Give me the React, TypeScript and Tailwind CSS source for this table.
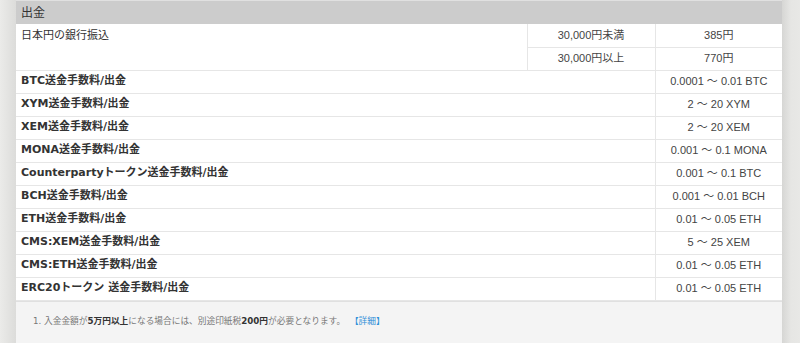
const rows: [string, string][] = [
  ["BTC送金手数料/出金", "0.0001 ～ 0.01 BTC"],
  ["XYM送金手数料/出金", "2 ～ 20 XYM"],
  ["XEM送金手数料/出金", "2 ～ 20 XEM"],
  ["MONA送金手数料/出金", "0.001 ～ 0.1 MONA"],
  ["Counterpartyトークン送金手数料/出金", "0.001 ～ 0.1 BTC"],
  ["BCH送金手数料/出金", "0.001 ～ 0.01 BCH"],
  ["ETH送金手数料/出金", "0.01 ～ 0.05 ETH"],
  ["CMS:XEM送金手数料/出金", "5 ～ 25 XEM"],
  ["CMS:ETH送金手数料/出金", "0.01 ～ 0.05 ETH"],
  ["ERC20トークン 送金手数料/出金", "0.01 ～ 0.05 ETH"],
];

export default function App() {
  return (
    <div className="flex w-[800px] h-[343px] overflow-hidden bg-[#e8e8e6] text-[#333] font-['DejaVu_Sans','Noto_Sans_CJK_JP',sans-serif]">
      <div className="w-4 bg-gradient-to-r from-[#ebebe9] to-[#dcdcda]"></div>

      <div className="w-[766px] flex flex-col bg-white">
        <div className="h-[24px] bg-[#cccccc] border-t border-[#e0e0e0] flex items-center px-[5px] text-[12px]">出金</div>

        <table className="w-full border-collapse text-[11px]">
          <colgroup>
            <col className="w-[511px]" />
            <col className="w-[128px]" />
            <col className="w-[127px]" />
          </colgroup>
          <tbody>
            <tr className="h-[23px]">
              <td rowSpan={2} className="align-top pl-[5px] pt-[4px] border-b border-[#e6e6e6] text-[11px]">日本円の銀行振込</td>
              <td className="text-center border-l border-b border-[#e6e6e6] font-['Liberation_Sans','Noto_Sans_CJK_JP',sans-serif] text-[#444]">30,000円未満</td>
              <td className="text-center border-l border-b border-[#e6e6e6] font-['Liberation_Sans','Noto_Sans_CJK_JP',sans-serif] text-[#444]">385円</td>
            </tr>
            <tr className="h-[23px]">
              <td className="text-center border-l border-b border-[#e6e6e6] font-['Liberation_Sans','Noto_Sans_CJK_JP',sans-serif] text-[#444]">30,000円以上</td>
              <td className="text-center border-l border-b border-[#e6e6e6] font-['Liberation_Sans','Noto_Sans_CJK_JP',sans-serif] text-[#444]">770円</td>
            </tr>
            {rows.map(([label, value]) => (
              <tr key={label} className="h-[23px]">
                <td colSpan={2} className="pl-[5px] font-bold border-b border-[#e6e6e6]">{label}</td>
                <td className="text-center border-l border-b border-[#e6e6e6] font-['Liberation_Sans','Noto_Sans_CJK_JP',sans-serif] text-[#444]">{value}</td>
              </tr>
            ))}
          </tbody>
        </table>

        <div className="flex-1 bg-[#f4f4f4] border-t border-[#e0e0e0] pl-[17px] pt-[13px] text-[8.7px] text-[#777]">
          1. 入金金額が<b className="text-[#333]">5万円以上</b>になる場合には、別途印紙税<b className="text-[#333]">200円</b>が必要となります。 <span className="text-[#2f8fd8] ml-[2px]">【詳細】</span>
        </div>
      </div>

      <div className="flex-1 bg-gradient-to-r from-[#d6d6d4] via-[#e6e6e4] to-[#e8e8e6]"></div>
    </div>
  );
}
